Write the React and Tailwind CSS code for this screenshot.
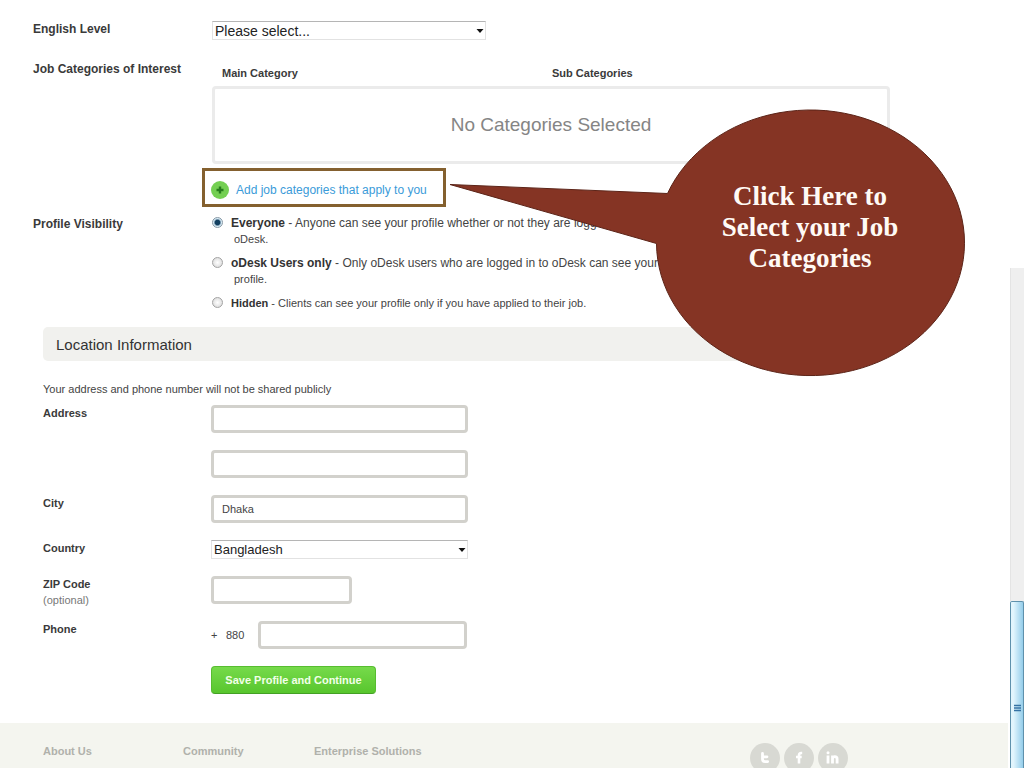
import { useState } from "react";

const visibilityOptions = [
  { id: "everyone", name: "Everyone", text: "Anyone can see your profile whether or not they are logged into", rest: "oDesk.", size: "text-xs" },
  { id: "users", name: "oDesk Users only", text: "Only oDesk users who are logged in to oDesk can see your", rest: "profile.", size: "text-xs" },
  { id: "hidden", name: "Hidden", text: "Clients can see your profile only if you have applied to their job.", size: "text-[11px]" },
];

const inputClass = "block h-7 rounded border-[3px] border-[#d2d1cc] bg-white px-2 text-[11px] text-[#444] outline-none";
const labelClass = "text-xs leading-4 font-bold text-[#3a3a3a]";
const smallLabelClass = "text-[11px] leading-4 font-bold text-[#3a3a3a]";

function Select({ id, value, className }) {
  return (
    <div className={`relative ${className}`}>
      <select
        id={id}
        className="block h-[19px] w-full appearance-none border border-[#e2e2e2] border-t-[#b5b5b5] bg-white pl-0.5 leading-4 text-[#222] outline-none"
      >
        <option>{value}</option>
      </select>
      <svg className="pointer-events-none absolute top-2 right-0.5" width="8" height="4" viewBox="0 0 8 4">
        <path d="M0.5 0h7L4 4z" fill="#111" />
      </svg>
    </div>
  );
}

function Callout() {
  return (
    <div className="pointer-events-none absolute -top-[62px] left-[244px] z-10 h-[268px] w-[517px]">
      <svg className="block" width="517" height="268" viewBox="0 0 517 268">
        <path
          d="M1 75.5 L218.500 84.500 A154 132.800 0 1 1 207.500 134.500 Z"
          fill="#853424"
          stroke="#5c2418"
          strokeWidth="1"
          strokeLinejoin="round"
        />
      </svg>
      <p className="absolute top-[72px] left-[207px] w-[308px] text-center font-['Palatino_Linotype','Liberation_Serif',serif] text-[27px] leading-[31px] font-bold text-[#fffaf5]">
        Click Here to
        <br />
        Select your Job
        <br />
        Categories
      </p>
    </div>
  );
}

function Footer() {
  return (
    <footer className="mt-[29px] flex h-24 items-start bg-[#f4f5ef] pl-[43px] text-[11px] leading-4 font-bold text-[#b0b1ab]">
      <nav className="flex pt-5">
        <a href="#about" className="w-[140px]">About Us</a>
        <a href="#community" className="w-[131px]">Community</a>
        <a href="#enterprise" className="w-[436px]">Enterprise Solutions</a>
      </nav>
      <div className="flex gap-1 pt-5">
        <a href="#twitter" aria-label="Twitter">
          <svg width="30" height="30" viewBox="0 0 30 30">
            <circle cx="15" cy="15" r="15" fill="#d8d9d3" />
            <path d="M12.500 10.500V16q0 2.600 2.600 2.600H17.700M12.500 13.800H17" fill="none" stroke="#fff" strokeWidth="2.800" strokeLinecap="round" strokeLinejoin="round" />
          </svg>
        </a>
        <a href="#facebook" aria-label="Facebook">
          <svg width="30" height="30" viewBox="0 0 30 30">
            <circle cx="15" cy="15" r="15" fill="#d8d9d3" />
            <path d="M18.200 10h-.9q-2.300 0-2.300 2.300V20.500M12 14h5.700" fill="none" stroke="#fff" strokeWidth="2.600" />
          </svg>
        </a>
        <a href="#linkedin" aria-label="LinkedIn">
          <svg width="30" height="30" viewBox="0 0 30 30">
            <circle cx="15" cy="15" r="15" fill="#d8d9d3" />
            <path d="M10 12.500V20.500M14.500 20.500v-8M14.500 16q0-2.300 2.300-2.300t2.300 2.300v4.500" fill="none" stroke="#fff" strokeWidth="2.800" />
            <circle cx="10" cy="9.800" r="1.500" fill="#fff" />
          </svg>
        </a>
      </div>
    </footer>
  );
}

export default function App() {
  const [visibility, setVisibility] = useState("everyone");
  const [city, setCity] = useState("Dhaka");

  return (
    <div className="flex h-screen overflow-hidden bg-white font-['Liberation_Sans',Arial,sans-serif] text-[#444]">
      <div className="min-w-0 flex-1">
        {/* Profile details */}
        <section className="grid grid-cols-[179px_1fr] pt-[21px] pl-[33px]">
          <label htmlFor="english" className={labelClass}>English Level</label>
          <Select id="english" value="Please select..." className="w-[274px] text-sm" />

          <h2 className={`mt-[21px] ${labelClass}`}>Job Categories of Interest</h2>
          <div className="mt-[25px]">
            <div className="flex pl-[10px] text-[11px] leading-4 font-bold text-[#3a3a3a]">
              <span className="w-[330px]">Main Category</span>
              <span>Sub Categories</span>
            </div>
            <div className="mt-[5px] flex h-[78px] w-full max-w-[678px] items-center justify-center rounded border-[3px] border-[#ebebeb] text-[19px] text-[#858585]">
              No Categories Selected
            </div>
            <div className="relative mt-1 -ml-[10px] h-[39px] w-[244px] border-[3px] border-[#84602f]">
              <button type="button" className="flex h-full w-full items-center gap-[7px] pt-1 pl-1.5 text-xs text-[#3a9bd9]">
                <svg width="18" height="18" viewBox="0 0 18 18">
                  <circle cx="9" cy="9" r="9" fill="#74cf52" />
                  <path d="M9 5.500v7M5.500 9h7" stroke="#267c1c" strokeWidth="2.400" />
                </svg>
                Add job categories that apply to you
              </button>
              <Callout />
            </div>
          </div>

          <h2 className={`mt-[9px] ${labelClass}`}>Profile Visibility</h2>
          <div className="mt-2 flex flex-col gap-2" role="radiogroup" aria-label="Profile Visibility">
            {visibilityOptions.map((option) => (
              <label key={option.id} className={`flex gap-2 leading-4 ${option.size}`}>
                <input
                  type="radio"
                  name="visibility"
                  checked={visibility === option.id}
                  onChange={() => setVisibility(option.id)}
                  className="mt-0.5 size-[11px] shrink-0 appearance-none rounded-full border border-[#a3a3a3] bg-radial from-white to-[#d4d4d4] checked:border-[#8798a5] checked:from-[#123f60] checked:from-35% checked:to-[#d6ebf5] checked:to-60%"
                />
                <span>
                  <b className="text-[#333]">{option.name}</b> - {option.text}
                  {option.rest && <span className="block pl-[3px] text-[11px] leading-4">{option.rest}</span>}
                </span>
              </label>
            ))}
          </div>
        </section>

        {/* Location */}
        <section className="pt-4 pl-[43px]">
          <h2 className="h-[34px] w-full max-w-[837px] rounded-[5px] bg-[#f1f1ee] pl-[13px] text-[15px] leading-9 text-[#333]">
            Location Information
          </h2>
          <p className="mt-5 text-[11px] leading-4">Your address and phone number will not be shared publicly</p>

          <div className="mt-2 grid grid-cols-[168px_1fr] gap-y-[17px]">
            <label htmlFor="address1" className={smallLabelClass}>Address</label>
            <input id="address1" type="text" className={`w-[257px] ${inputClass}`} />

            <span />
            <input type="text" aria-label="Address line 2" className={`w-[257px] ${inputClass}`} />

            <label htmlFor="city" className={smallLabelClass}>City</label>
            <input id="city" type="text" value={city} onChange={(e) => setCity(e.target.value)} className={`w-[257px] ${inputClass}`} />

            <label htmlFor="country" className={smallLabelClass}>Country</label>
            <Select id="country" value="Bangladesh" className="w-[257px] text-[13px]" />

            <label htmlFor="zip" className={`h-7 ${smallLabelClass}`}>
              ZIP Code
              <span className="block font-normal text-[#777]">(optional)</span>
            </label>
            <input id="zip" type="text" className={`w-[141px] ${inputClass}`} />

            <label htmlFor="phone" className={smallLabelClass}>Phone</label>
            <div className="flex items-center text-[11px]">
              <span className="w-[15px]">+</span>
              <span className="w-8">880</span>
              <input id="phone" type="tel" className={`w-[209px] ${inputClass}`} />
            </div>

            <span />
            <button
              type="button"
              className="h-7 w-[165px] rounded border border-[#57bd30] border-b-[#43a024] bg-linear-to-b from-[#76da4a] to-[#58c62d] text-[11px] font-bold text-[#f2ffe9]"
            >
              Save Profile and Continue
            </button>
          </div>
        </section>

        <Footer />
      </div>

      {/* Scrollbar */}
      <div className="flex w-4 shrink-0 flex-col pt-[268px] pl-0.5" aria-hidden="true">
        <div className="h-[333px] border-l border-[#e4e4e4] bg-[#efefef]" />
        <div className="flex flex-1 justify-center rounded-t-xs border border-b-0 border-[#5f91ac] bg-linear-to-r from-[#e2f5fd] from-20% to-[#94cdea] pt-[102px]">
          <svg width="7" height="8" viewBox="0 0 7 8">
            <path d="M0 1.500h7M0 4h7M0 6.500h7" stroke="#3673a5" strokeWidth="1.300" />
          </svg>
        </div>
      </div>
    </div>
  );
}
